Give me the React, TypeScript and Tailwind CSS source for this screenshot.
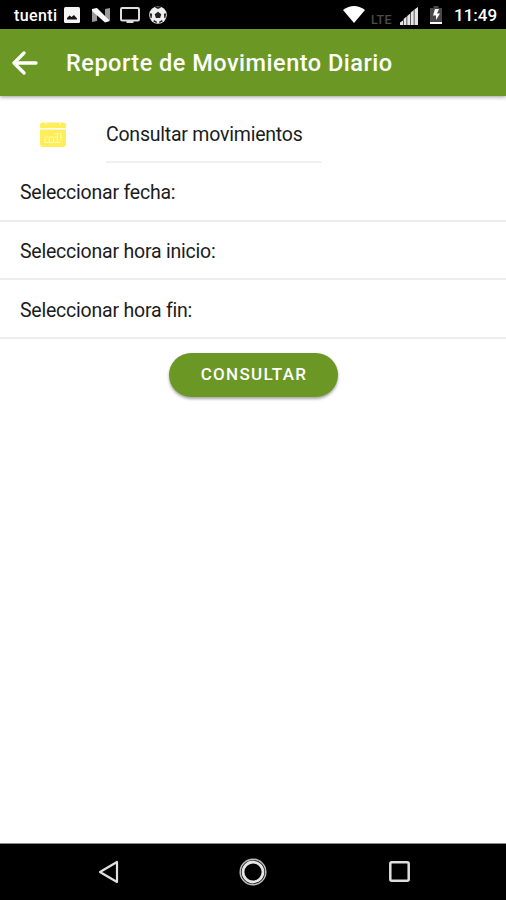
import React from 'react';

function StatusBar() {
  return (
    <div className="flex h-[29px] shrink-0 items-start bg-black text-white">
      <span className="ml-[14px] mt-[5px] w-[44px] whitespace-nowrap text-[16px] font-medium leading-[21px] tracking-[0.4px]">tuenti</span>
      <svg className="ml-[6px] mt-[7px]" width="16" height="16" viewBox="0 0 16 16">
        <rect width="16" height="16" rx="1.5" fill="#f4f4f4" />
        <path d="M3 12.500V11l2.500-2.500 2 1.500L10 8l3 3.500v1z" fill="#111" />
      </svg>
      <svg className="ml-[12px] mt-[8px]" width="18" height="15" viewBox="0 0 18 15">
        <path d="M0 2 5 0v13l-5 1zM13 1l5-1v12l-5 2z" fill="#999" />
        <path d="M0 1 5 0l13 13-5 1.500L0 3z" fill="#f6f6f6" />
      </svg>
      <svg className="ml-[10px] mt-[7px]" width="20" height="17" viewBox="0 0 20 17">
        <rect x="1" y="1" width="18" height="12.5" rx="1.2" fill="none" stroke="#ddd" strokeWidth="2" />
        <path d="M6.500 14h7v2h-7z" fill="#ddd" />
      </svg>
      <svg className="ml-[9px] mt-[6px]" width="18" height="18" viewBox="0 0 18 18">
        <circle cx="9" cy="9" r="8.800" fill="#eee" />
        <path d="m9 5.800 3.300 2.400-1.200 3.900H6.900L5.700 8.200zM6 1.500 9 3l3-1.500-.8-1H6.800zM.8 7.200l2.300.6L2.700 12l-1.100.2zM17.200 7.200l-2.300.6.4 4.200 1.100.2zM5 14l3 1.700-.5 1.400-3.200-1.500zM13 14l-3 1.700.5 1.400 3.200-1.500z" fill="#222" />
      </svg>
      <svg className="ml-auto mt-[6px]" width="22" height="17" viewBox="0 0 22 17">
        <path d="M0 4Q11-4 22 4L11 17z" fill="#fff" />
      </svg>
      <span className="ml-[6px] mt-[13px] w-[22px] whitespace-nowrap text-[12.500px] font-medium leading-[14px] tracking-[0.3px] text-[#4b4b4b]">LTE</span>
      <svg className="ml-[7px] mt-[7px]" width="18" height="18" viewBox="0 0 18 18">
        <path d="M0 18v-2.500L3 13.500V18zM3.600 18v-6l3-2.500V18zM7.200 18V9l3-2.500V18zM10.800 18V5.500l3-2.500v15zM14.400 18V2.500L18 0v18z" fill="#e5e5e5" />
      </svg>
      <svg className="ml-[12px] mt-[6px]" width="12" height="19" viewBox="0 0 12 19">
        <path d="M3.500 0h5v2H12v14H0V2h3.500z" fill="#484848" />
        <path d="M0 16h12v2H0z" fill="#fff" />
        <path d="m5 3-2 6.500h3V14l4-6.500H7L9 3z" fill="#fff" />
      </svg>
      <span className="ml-[12px] mr-[9px] mt-[5px] w-[43px] whitespace-nowrap text-[17px] font-medium leading-[21px]">11:49</span>
    </div>
  );
}

function Header() {
  return (
    <header className="relative flex h-[67px] shrink-0 items-center bg-[#6b9825] text-white shadow-[0_1px_4px_rgba(0,0,0,0.4)]">
      <svg className="ml-[12px]" width="26" height="24" viewBox="0 0 26 24" fill="none" stroke="#fff" strokeWidth="3.300" strokeLinecap="round" strokeLinejoin="round">
        <path d="M12 2 2 12l10 10M2 12h22" />
      </svg>
      <h1 className="ml-[28px] whitespace-nowrap pt-[3px] text-[23.500px] font-medium tracking-[0.5px]">Reporte de Movimiento Diario</h1>
    </header>
  );
}

function CalendarIcon() {
  return (
    <svg width="26" height="26" viewBox="0 0 26 26">
      <path d="M3 .5h20q3 0 3 3V6H0V3.500q0-3 3-3z" fill="#ffee58" />
      <path d="M0 7.500h26V22q0 3-3 3H3q-3 0-3-3z" fill="#ffee58" />
      <path d="M5 1.500h2M19 1.500h2" stroke="#fff8bd" strokeWidth="1.500" />
      <path d="M4.500 15h4M10 15h3M14.500 11.500h7M14.500 15h3M21 11v8M4.500 20.500h16M5 15v5.500M9.200 15v5.500M13.500 15v5.500M17.500 12v8.500" fill="none" stroke="#fff8b0" strokeWidth="1.200" />
    </svg>
  );
}

function Row({ label }: { label: string }) {
  return (
    <div className="flex h-[58.700px] items-center border-b-2 border-[#ececec] pl-[20px] pt-[3px]">
      <span className="whitespace-nowrap text-[19.500px] tracking-[-0.22px]">{label}</span>
    </div>
  );
}

export default function App() {
  return (
    <div className="flex h-[900px] w-[506px] flex-col overflow-hidden bg-white font-[Roboto,sans-serif] text-[#1c1c1c]">
      <StatusBar />
      <Header />
      <main className="flex-1">
        <div className="flex h-[67px] pl-[40px]">
          <div className="mt-[26px]"><CalendarIcon /></div>
          <div className="ml-[40px] flex w-[216px] items-center border-b-2 border-[#f0f0f0] pt-[13px]">
            <span className="whitespace-nowrap text-[19.500px] tracking-[-0.22px]">Consultar movimientos</span>
          </div>
        </div>
        <Row label="Seleccionar fecha:" />
        <Row label="Seleccionar hora inicio:" />
        <Row label="Seleccionar hora fin:" />
        <button className="mx-auto mt-[14px] flex h-[44px] w-[169px] items-center justify-center rounded-full bg-[#6b9825] pl-[2px] text-[17px] font-medium tracking-[1.300px] text-white shadow-[0_2px_3px_rgba(0,0,0,0.35)]">CONSULTAR</button>
      </main>
      <nav className="flex h-[57px] shrink-0 items-center border-t border-[#888] bg-black pb-[1px]">
        <svg className="ml-[98px]" width="22" height="24" viewBox="0 0 22 24" fill="none" stroke="#e0e0e0" strokeWidth="2.200" strokeLinejoin="round">
          <path d="M19 2v20L2 12z" />
        </svg>
        <svg className="ml-[119px]" width="28" height="28" viewBox="0 0 28 28" fill="none">
          <circle cx="14" cy="14" r="12.800" stroke="#bdbdbd" strokeWidth="1.500" />
          <circle cx="14" cy="14" r="10" stroke="#e6e6e6" strokeWidth="2.800" />
        </svg>
        <svg className="ml-[122px]" width="21" height="21" viewBox="0 0 21 21">
          <rect x="1.300" y="1.300" width="18.400" height="18.400" rx="1.500" fill="none" stroke="#dedede" strokeWidth="2.500" />
        </svg>
      </nav>
    </div>
  );
}
